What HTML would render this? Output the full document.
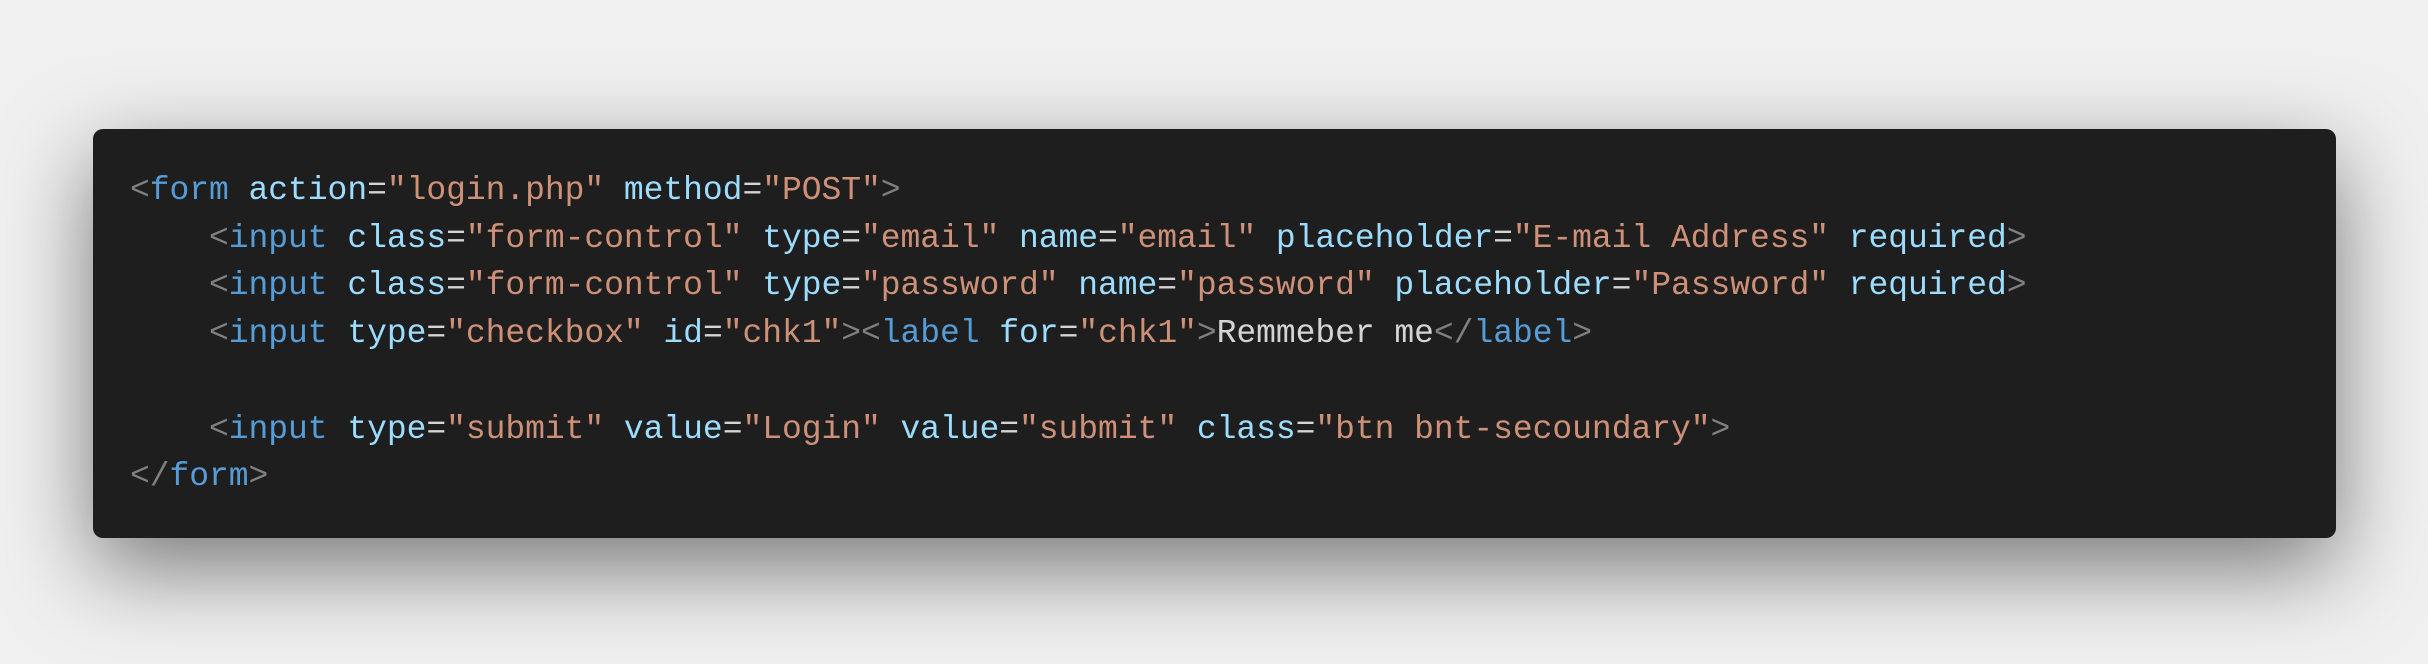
<!DOCTYPE html>
<html><head><meta charset="utf-8"><style>
html,body{margin:0;padding:0;}
body{width:2428px;height:664px;background:#f0f0f0;position:relative;overflow:hidden;}
.box{position:absolute;left:93px;top:129px;width:2243px;height:409px;background:#1e1e1e;border-radius:10px;box-shadow:0 30px 90px rgba(0,0,0,0.5);}
pre{position:absolute;left:130px;top:167px;margin:0;font-family:"Liberation Mono",monospace;font-size:33px;line-height:47.7px;color:#d4d4d4;letter-spacing:-0.05px;}
.p{color:#808080}.t{color:#569cd6}.a{color:#9cdcfe}.s{color:#ce9178}.e{color:#d4d4d4}
</style></head><body>
<div class="box"></div>
<pre><span class="p">&lt;</span><span class="t">form</span> <span class="a">action</span><span class="e">=</span><span class="s">"login.php"</span> <span class="a">method</span><span class="e">=</span><span class="s">"POST"</span><span class="p">&gt;</span>
    <span class="p">&lt;</span><span class="t">input</span> <span class="a">class</span><span class="e">=</span><span class="s">"form-control"</span> <span class="a">type</span><span class="e">=</span><span class="s">"email"</span> <span class="a">name</span><span class="e">=</span><span class="s">"email"</span> <span class="a">placeholder</span><span class="e">=</span><span class="s">"E-mail Address"</span> <span class="a">required</span><span class="p">&gt;</span>
    <span class="p">&lt;</span><span class="t">input</span> <span class="a">class</span><span class="e">=</span><span class="s">"form-control"</span> <span class="a">type</span><span class="e">=</span><span class="s">"password"</span> <span class="a">name</span><span class="e">=</span><span class="s">"password"</span> <span class="a">placeholder</span><span class="e">=</span><span class="s">"Password"</span> <span class="a">required</span><span class="p">&gt;</span>
    <span class="p">&lt;</span><span class="t">input</span> <span class="a">type</span><span class="e">=</span><span class="s">"checkbox"</span> <span class="a">id</span><span class="e">=</span><span class="s">"chk1"</span><span class="p">&gt;&lt;</span><span class="t">label</span> <span class="a">for</span><span class="e">=</span><span class="s">"chk1"</span><span class="p">&gt;</span>Remmeber me<span class="p">&lt;/</span><span class="t">label</span><span class="p">&gt;</span>

    <span class="p">&lt;</span><span class="t">input</span> <span class="a">type</span><span class="e">=</span><span class="s">"submit"</span> <span class="a">value</span><span class="e">=</span><span class="s">"Login"</span> <span class="a">value</span><span class="e">=</span><span class="s">"submit"</span> <span class="a">class</span><span class="e">=</span><span class="s">"btn bnt-secoundary"</span><span class="p">&gt;</span>
<span class="p">&lt;/</span><span class="t">form</span><span class="p">&gt;</span></pre>
</body></html>
